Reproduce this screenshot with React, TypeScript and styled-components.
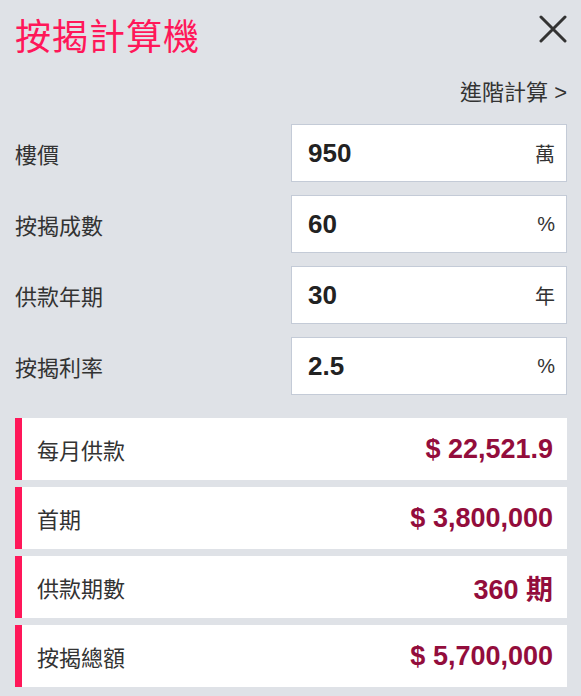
import { useState } from 'react';
import styled, { createGlobalStyle } from 'styled-components';

const GlobalStyle = createGlobalStyle`
  html, body {
    margin: 0;
    padding: 0;
    background: #dfe2e7;
  }
  body {
    font-family: "Liberation Sans", "Noto Sans CJK TC", sans-serif;
    color: #333;
  }
`

const Page = styled.div`
  padding: 15px 14px 8px 15px;
  background: #dfe2e7;
`

const Header = styled.div`
  display: flex;
  justify-content: space-between;
  align-items: flex-start;
`

const Title = styled.h1`
  margin: 5px 0 0;
  font-size: 36px;
  line-height: 36px;
  font-weight: 400;
  color: #ff1759;
  letter-spacing: 1px;
`

const CloseBtn = styled.button`
  width: 28px;
  height: 28px;
  padding: 0;
  border: 0;
  background: none;
  cursor: pointer;
  color: #333;
  display: flex;
`

const AdvancedLink = styled.a`
  align-self: flex-end;
  margin-top: 26px;
  font-size: 22px;
  line-height: 22px;
  color: #333;
  text-decoration: none;
  cursor: pointer;
`

const TopArea = styled.div`
  display: flex;
  flex-direction: column;
`

const Form = styled.div`
  display: flex;
  flex-direction: column;
  gap: 13px;
  margin-top: 20px;
`

const FieldRow = styled.div`
  display: flex;
  justify-content: space-between;
  align-items: center;
  height: 58px;
`

const FieldLabel = styled.span`
  font-size: 22px;
  color: #333;
`

const InputBox = styled.label`
  width: 276px;
  height: 58px;
  box-sizing: border-box;
  border: 1px solid #c4cbd7;
  background: #fff;
  display: flex;
  align-items: center;
  padding: 0 11px 0 16px;
`

const NumInput = styled.input`
  flex: 1;
  min-width: 0;
  border: 0;
  outline: none;
  background: transparent;
  font-family: "Liberation Sans", sans-serif;
  font-size: 26px;
  font-weight: 700;
  color: #222;
  padding: 0;
`

const Unit = styled.span`
  font-size: 20px;
  color: #333;
`

const Results = styled.div`
  display: flex;
  flex-direction: column;
  gap: 7px;
  margin-top: 23px;
`

const ResultRow = styled.div`
  height: 62px;
  box-sizing: border-box;
  background: #fff;
  border-left: 7px solid #ff1759;
  display: flex;
  justify-content: space-between;
  align-items: center;
  padding: 0 14px 0 15px;
`

const ResultLabel = styled.span`
  font-size: 22px;
  color: #333;
`

const ResultValue = styled.span`
  font-size: 27px;
  font-weight: 700;
  color: #930d3c;
`

const fields = [
  { key: 'price', label: '樓價', value: '950', unit: '萬' },
  { key: 'ratio', label: '按揭成數', value: '60', unit: '%' },
  { key: 'years', label: '供款年期', value: '30', unit: '年' },
  { key: 'rate', label: '按揭利率', value: '2.5', unit: '%' },
];

const results = [
  { label: '每月供款', value: '$ 22,521.9' },
  { label: '首期', value: '$ 3,800,000' },
  { label: '供款期數', value: '360 期' },
  { label: '按揭總額', value: '$ 5,700,000' },
];

export default function App() {
  const [values, setValues] = useState<{ [key: string]: string }>(
    Object.fromEntries(fields.map((f) => [f.key, f.value]))
  );

  return (
    <>
      <GlobalStyle />
      <Page>
        <TopArea>
          <Header>
            <Title>按揭計算機</Title>
            <CloseBtn aria-label="close">
              <svg width="28" height="28" viewBox="0 0 28 28">
                <path d="M2 2 L26 26 M26 2 L2 26" stroke="currentColor" strokeWidth="3" strokeLinecap="round" fill="none" />
              </svg>
            </CloseBtn>
          </Header>
          <AdvancedLink>進階計算 &gt;</AdvancedLink>
        </TopArea>

        <Form>
          {fields.map((f) => (
            <FieldRow key={f.key}>
              <FieldLabel>{f.label}</FieldLabel>
              <InputBox>
                <NumInput
                  value={values[f.key]}
                  onChange={(e) => setValues({ ...values, [f.key]: e.target.value })}
                />
                <Unit>{f.unit}</Unit>
              </InputBox>
            </FieldRow>
          ))}
        </Form>

        <Results>
          {results.map((r) => (
            <ResultRow key={r.label}>
              <ResultLabel>{r.label}</ResultLabel>
              <ResultValue>{r.value}</ResultValue>
            </ResultRow>
          ))}
        </Results>
      </Page>
    </>
  );
}
